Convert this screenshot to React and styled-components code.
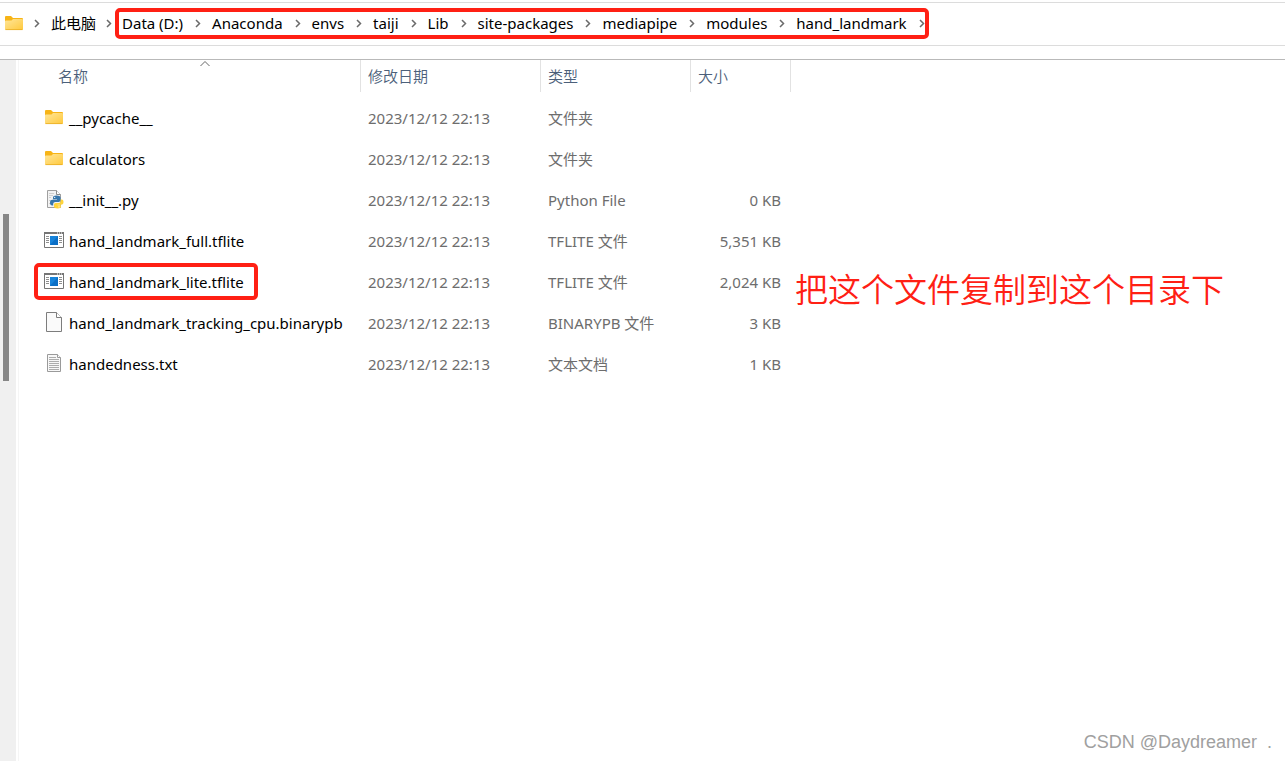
import React from 'react'
import styled, { createGlobalStyle, css } from 'styled-components'

const GlobalStyle = createGlobalStyle`
  *,
  *::before,
  *::after {
    box-sizing: border-box;
  }

  body {
    margin: 0;
    background: #fff;
    color: #000;
    font-family: 'Noto Sans', 'Noto Sans CJK SC', sans-serif;
    font-size: 15px;
    line-height: 20px;
  }

  button {
    font: inherit;
    color: inherit;
    background: none;
    border: 0;
    padding: 0;
  }
`

const Page = styled.div`
  position: relative;
  display: flex;
  flex-direction: column;
  min-height: 100vh;
`

const AddressBar = styled.nav`
  display: flex;
  align-items: center;
  height: 44px;
  margin-top: 2px;
  padding: 0 0 2px 4px;
  border-top: 1px solid #dcdcdc;
  border-bottom: 1px solid #dcdcdc;
`

const Crumbs = styled.ol`
  display: flex;
  align-items: center;
  list-style: none;
  margin: 0;
  padding: 0;

  ${({ $marked }) => $marked && css`
    height: 31px;
    margin-left: 3px;
    padding-left: 3px;
    border: 4px solid #ff2014;
    border-radius: 5px;
  `}
`

const Crumb = styled.li`
  display: flex;
  align-items: center;
  white-space: nowrap;
`

const Separator = styled.svg`
  flex: none;
  width: 6px;
  height: 9px;
  margin: 0 ${({ $last }) => ($last ? '0' : '11px')} 0 ${({ $outer }) => ($outer ? '10px' : '12px')};
  fill: none;
  stroke: #6a6a6a;
  stroke-width: 1.5;
`

const Icon = styled.svg`
  flex: none;
  width: 20px;
  height: 20px;
`

const Content = styled.div`
  display: flex;
  flex: 1;
  margin-top: 13px;
  border-top: 1px solid #b9b9b9;
`

const TreeEdge = styled.aside`
  flex: none;
  width: 16px;
  padding: 154px 0 0 3px;
  background: #f0f0f0;
`

const Thumb = styled.div`
  width: 6px;
  height: 167px;
  background: #868686;
`

const Listing = styled.main`
  flex: 1;
  margin-left: 2px;
  border-left: 1px solid #f5f5f5;
`

const Table = styled.table`
  width: 100%;
  table-layout: fixed;
  border-spacing: 0;
`

const Col = styled.col`
  width: ${({ $width }) => $width};
`

const Head = styled.thead`
  &::after {
    content: '';
    display: block;
    height: 6px;
  }
`

const HeadCell = styled.th`
  position: relative;
  height: 32px;
  padding: 0 0 0 ${({ $first }) => ($first ? '39px' : '7px')};
  border-right: ${({ $plain }) => ($plain ? '0' : '1px solid #e2e2e2')};
  color: #4c607a;
  font-weight: 350;
  text-align: left;
`

const SortMark = styled.svg`
  position: absolute;
  top: 0;
  left: 181px;
  width: 10px;
  height: 7px;
  fill: none;
  stroke: #666;
`

const Cell = styled.td`
  height: 41px;
  padding: 0 ${({ $right }) => ($right ? '10px' : '0')} 2px 7px;
  color: #6d6d6d;
  text-align: ${({ $right }) => ($right ? 'right' : 'left')};
  white-space: nowrap;
`

const NameCell = styled.td`
  position: relative;
  height: 41px;
  padding: 0 0 2px 25px;
  white-space: nowrap;
`

const FileLink = styled.a`
  display: inline-flex;
  align-items: center;
  gap: 5px;
  color: #000;
  text-decoration: none;
  vertical-align: middle;

  ${Icon} {
    margin: -1px 0 1px;
  }

  ${({ $marked }) => $marked && css`
    &::before {
      content: '';
      position: absolute;
      top: 1px;
      left: 15px;
      width: 224px;
      height: 37px;
      border: 4px solid #ff2014;
      border-radius: 5px;
    }
  `}
`

const NoteCell = styled.td`
  position: relative;
  padding: 0;
`

const Note = styled.strong`
  position: absolute;
  top: 4px;
  left: 4px;
  color: #ff2014;
  font-size: 33px;
  font-weight: 350;
  line-height: 48px;
  white-space: nowrap;
`

const Watermark = styled.footer`
  position: absolute;
  right: 13px;
  bottom: 8px;
  color: #a0a0a0;
  font-family: 'Liberation Sans', sans-serif;
  font-size: 18px;
  line-height: 22px;
  white-space: pre;
`

const FolderIcon = () => (
  <Icon viewBox="0 0 20 20" aria-hidden="true">
    <defs>
      <linearGradient id="folder" x1="0" y1="0" x2="1" y2="1">
        <stop offset="0" stopColor="#ffe69a" />
        <stop offset="1" stopColor="#ffc93c" />
      </linearGradient>
    </defs>
    <path d="M1 4q0-1 1-1h5l2 2h9q1 0 1 1v5H1z" fill="#f7b416" />
    <path d="M1 8.500q0-1 1-1h5.500l1.500-1.500h9q1 0 1 1v9q0 1-1 1H2q-1 0-1-1z" fill="url(#folder)" />
    <path d="M1.500 16.600h17" stroke="#e9ac22" strokeWidth="0.800" />
  </Icon>
)

const PythonIcon = () => (
  <Icon viewBox="0 0 20 20" aria-hidden="true">
    <path d="M3.500 1.500h9l4 4v13h-13z" fill="#f3f3f3" stroke="#a0a0a0" />
    <path d="M12.500 1.500v4h4" fill="#fff" stroke="#8b8b8b" />
    <path d="M5 4.500h5M5 6.500h4M5 8.500h2M5 11.500h2M5 14.500h3" stroke="#cfcfcf" />
    <path
      d="M12.500 6.500c-3 0-3.500 1-3.500 2.200v1.500h4v.6H8.500C6.700 10.800 6 12 6 13.700s.8 2.800 2.200 2.800h1v-1.600c0-1.200 1-2 2.200-2h3.400c1 0 1.700-.8 1.700-1.800V8.700c0-1.500-1.500-2.200-4-2.200z"
      fill="#3776ab"
    />
    <path
      d="M13.500 19.500c2.800 0 3.500-.9 3.500-2.200v-1h-3.500v-.6H17c1.700 0 2.500-1 2.500-2.700S18.800 10.500 17.500 10.500h-.8v1.500c0 1.200-.9 2-2 2h-3c-1 0-1.700.8-1.700 1.800v1.700c0 1.300 1.300 2 3.500 2z"
      fill="#ffd43b"
    />
    <circle cx="10.700" cy="8.400" r="0.600" fill="#fff" />
    <circle cx="15" cy="17.800" r="0.600" fill="#fff" />
  </Icon>
)

const BinaryIcon = () => (
  <Icon viewBox="0 0 20 20" aria-hidden="true">
    <path d="M.5 2.500h19v15H.5z" fill="#fff" stroke="#757575" />
    <path d="M0 2h20v2H0z" fill="#757575" />
    <path d="M13 3h1M15 3h1M17 3h1" stroke="#fff" />
    <path d="M2 6.500h3M2 8.500h3M2 10.500h3M2 12.500h3M15 6.500h3M15 8.500h3M15 10.500h3M15 12.500h3" stroke="#8f8f8f" />
    <path d="M6 6h8v9H6z" fill="#0b6fc6" />
    <path d="M6 6h8l-8 9z" fill="#1683da" />
  </Icon>
)

const BlankIcon = () => (
  <Icon viewBox="0 0 20 20" aria-hidden="true">
    <path d="M2.500.5h10l5 5v14h-15z" fill="#fafafa" stroke="#7d7d7d" />
    <path d="M12.500.5v5h5" fill="#fff" stroke="#7d7d7d" />
  </Icon>
)

const TextIcon = () => (
  <Icon viewBox="0 0 20 20" aria-hidden="true">
    <path d="M3.500 1.500h10l3 3v14h-13z" fill="#f8f8f8" stroke="#9a9a9a" />
    <path d="M13.500 1.500v3h3" fill="#fff" stroke="#9a9a9a" />
    <path d="M5 4.500h7M5 6.500h10M5 8.500h10M5 10.500h10M5 12.500h10M5 14.500h10M5 16.500h10" stroke="#adadad" />
  </Icon>
)

const Chevron = ({ outer, last }) => (
  <Separator viewBox="0 0 6 9" $outer={outer} $last={last} aria-hidden="true">
    <path d="M1 1l3.500 3.500L1 8" />
  </Separator>
)

const path = [
  'Data (D:)',
  'Anaconda',
  'envs',
  'taiji',
  'Lib',
  'site-packages',
  'mediapipe',
  'modules',
  'hand_landmark'
]

const files = [
  { name: '__pycache__', icon: FolderIcon, type: '文件夹', size: '' },
  { name: 'calculators', icon: FolderIcon, type: '文件夹', size: '' },
  { name: '__init__.py', icon: PythonIcon, type: 'Python File', size: '0 KB' },
  { name: 'hand_landmark_full.tflite', icon: BinaryIcon, type: 'TFLITE 文件', size: '5,351 KB' },
  {
    name: 'hand_landmark_lite.tflite',
    icon: BinaryIcon,
    type: 'TFLITE 文件',
    size: '2,024 KB',
    note: '把这个文件复制到这个目录下'
  },
  { name: 'hand_landmark_tracking_cpu.binarypb', icon: BlankIcon, type: 'BINARYPB 文件', size: '3 KB' },
  { name: 'handedness.txt', icon: TextIcon, type: '文本文档', size: '1 KB' }
]

function App() {
  return (
    <Page>
      <GlobalStyle />
      <AddressBar>
        <FolderIcon />
        <Crumbs>
          <Crumb>
            <Chevron outer />
            <button type="button">此电脑</button>
            <Chevron outer last />
          </Crumb>
        </Crumbs>
        <Crumbs $marked>
          {path.map((part, i) => (
            <Crumb key={part}>
              <button type="button">{part}</button>
              <Chevron last={i === path.length - 1} />
            </Crumb>
          ))}
        </Crumbs>
      </AddressBar>

      <Content>
        <TreeEdge>
          <Thumb />
        </TreeEdge>
        <Listing>
          <Table>
            <colgroup>
              <Col $width="342px" />
              <Col $width="180px" />
              <Col $width="150px" />
              <Col $width="100px" />
              <Col $width="auto" />
            </colgroup>
            <Head>
              <tr>
                <HeadCell $first>
                  <button type="button">名称</button>
                  <SortMark viewBox="0 0 10 7" aria-hidden="true">
                    <path d="M.5 6L5 1.500 9.500 6" />
                  </SortMark>
                </HeadCell>
                <HeadCell><button type="button">修改日期</button></HeadCell>
                <HeadCell><button type="button">类型</button></HeadCell>
                <HeadCell><button type="button">大小</button></HeadCell>
                <HeadCell as="td" $plain />
              </tr>
            </Head>
            <tbody>
              {files.map(({ name, icon: FileIcon, type, size, note }) => (
                <tr key={name}>
                  <NameCell>
                    <FileLink href="#" $marked={Boolean(note)}>
                      <FileIcon />
                      {name}
                    </FileLink>
                  </NameCell>
                  <Cell>2023/12/12 22:13</Cell>
                  <Cell>{type}</Cell>
                  <Cell $right>{size}</Cell>
                  <NoteCell>{note && <Note>{note}</Note>}</NoteCell>
                </tr>
              ))}
            </tbody>
          </Table>
        </Listing>
      </Content>

      <Watermark>{'CSDN @Daydreamer  .'}</Watermark>
    </Page>
  )
}

export default App
